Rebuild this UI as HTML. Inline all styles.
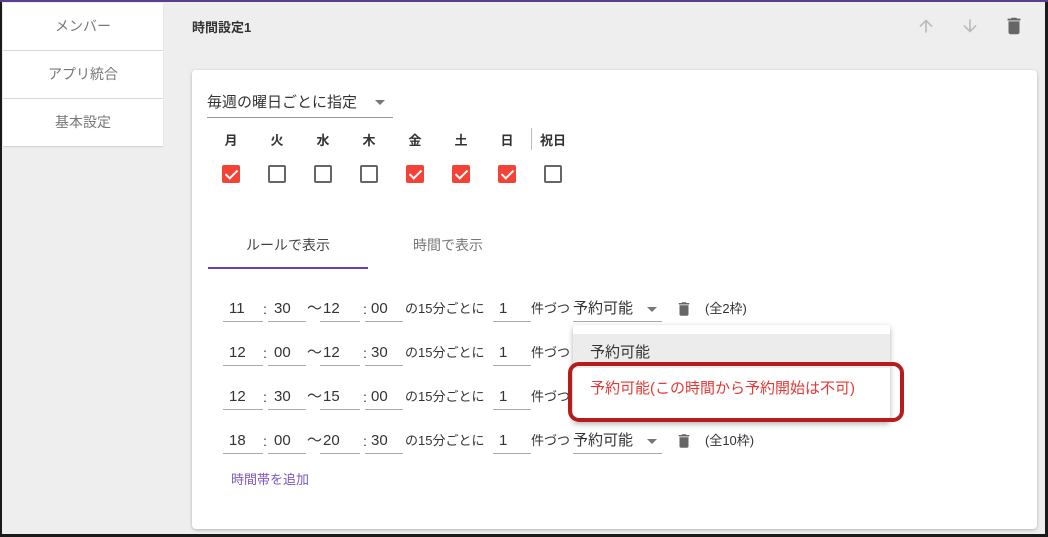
<!DOCTYPE html>
<html><head><meta charset="utf-8"><style>
*{margin:0;padding:0;box-sizing:border-box}
body{width:1048px;height:537px;overflow:hidden;background:#1a1a1a;font-family:"Liberation Sans","Noto Sans CJK JP",sans-serif;position:relative}
.frame{position:absolute;left:2px;top:2px;width:1043px;height:532px;background:#eeeeee;overflow:hidden}
.top{position:absolute;left:0;top:0;width:1048px;height:2px;background:#5a3f8a}
.a{position:absolute;white-space:nowrap}
.side{position:absolute;left:1px;width:160px;height:47px;background:#fff;color:#777;font-size:14px;text-align:center;line-height:47px;box-shadow:0 1px 1px rgba(0,0,0,.12)}
.card{position:absolute;left:190px;top:68px;width:845px;height:459px;background:#fff;border-radius:4px;box-shadow:0 1px 3px rgba(0,0,0,.25)}
.day{position:absolute;top:128px;font-size:13px;font-weight:bold;color:#333;width:30px;text-align:center}
.cb{position:absolute;top:163px;width:18px;height:18px;border:2px solid #666;border-radius:2px}
.cb.on{background:#f44336;border-color:#f44336}
.cb.on::after{content:"";position:absolute;left:4px;top:0px;width:5px;height:10px;border:solid #fff;border-width:0 2px 2px 0;transform:rotate(45deg)}
.f{position:absolute;font-size:15px;color:#333;border-bottom:1px solid #aaa;height:27px;line-height:27px;padding-left:6px}
.t{position:absolute;font-size:14px;color:#333;line-height:26px}
.arr{position:absolute;width:0;height:0;border-left:5px solid transparent;border-right:5px solid transparent;border-top:5px solid #777}
</style></head><body>
<div class="frame">
<div class="side" style="top:1px">メンバー</div>
<div class="side" style="top:49px">アプリ統合</div>
<div class="side" style="top:97px">基本設定</div>
<div class="a" style="left:190px;top:15px;font-size:13px;font-weight:bold;color:#333">時間設定1</div>
<svg class="a" style="left:914px;top:14px" width="20" height="20" viewBox="0 0 24 24"><path d="M4 12l1.4 1.4L11 7.8V20h2V7.8l5.6 5.6L20 12l-8-8z" fill="#bbb"/></svg>
<svg class="a" style="left:958px;top:14px" width="20" height="20" viewBox="0 0 24 24"><path d="M20 12l-1.4-1.4L13 16.2V4h-2v12.2l-5.6-5.6L4 12l8 8z" fill="#bbb"/></svg>
<svg class="a" style="left:1001px;top:13px" width="22" height="22" viewBox="0 0 24 24"><path d="M6 19c0 1.1.9 2 2 2h8c1.1 0 2-.9 2-2V7H6zM19 4h-3.5l-1-1h-5l-1 1H5v2h14z" fill="#666"/></svg>
<div class="card"></div>
<div class="a" style="left:205px;top:89px;font-size:15px;color:#333">毎週の曜日ごとに指定</div>
<div class="arr" style="left:373px;top:98px"></div>
<div class="a" style="left:205px;top:115px;width:186px;height:1px;background:#999"></div>
<div class="day" style="left:214px">月</div><div class="day" style="left:260px">火</div><div class="day" style="left:306px">水</div><div class="day" style="left:352px">木</div><div class="day" style="left:398px">金</div><div class="day" style="left:444px">土</div><div class="day" style="left:490px">日</div><div class="day" style="left:536px">祝日</div>
<div class="a" style="left:529px;top:126px;width:1px;height:22px;background:#bbb"></div>
<div class="cb on" style="left:220px"></div><div class="cb" style="left:266px"></div><div class="cb" style="left:312px"></div><div class="cb" style="left:358px"></div><div class="cb on" style="left:404px"></div><div class="cb on" style="left:450px"></div><div class="cb on" style="left:496px"></div><div class="cb" style="left:542px"></div>
<div class="a" style="left:206px;top:233px;width:160px;text-align:center;font-size:14px;color:#444">ルールで表示</div>
<div class="a" style="left:366px;top:233px;width:160px;text-align:center;font-size:14px;color:#777">時間で表示</div>
<div class="a" style="left:206px;top:265px;width:160px;height:2px;background:#6a3fb5"></div>

<div id="rows"></div>
<div class="a" style="left:229px;top:467px;font-size:13px;color:#7e57c2">時間帯を追加</div>

<div class="a" style="left:571px;top:323px;width:317px;height:97px;background:#fff;box-shadow:0 2px 6px rgba(0,0,0,.3);border-radius:3px"></div>
<div class="a" style="left:571px;top:332px;width:317px;height:34px;background:#ececec"></div>
<div class="a" style="left:588px;top:339px;font-size:15px;color:#333">予約可能</div>
<div class="a" style="left:566px;top:360px;width:336px;height:60px;border:4px solid #b71c1c;border-radius:11px"></div>
<div class="a" style="left:588px;top:375px;font-size:15px;color:#e53935">予約可能(この時間から予約開始は不可)</div>
</div>
<div class="top"></div>
<script>
var rows=[["11","30","12","00","(全2枠)",true],["12","00","12","30","",false],["12","30","15","00","",false],["18","00","20","30","(全10枠)",true]];
var h="";rows.forEach(function(r,i){var y=293+i*44;
h+='<div class="f" style="left:221px;top:'+y+'px;width:40px">'+r[0]+'</div>';
h+='<div class="t" style="left:261px;top:'+(y+1)+'px">:</div>';
h+='<div class="f" style="left:266px;top:'+y+'px;width:38px">'+r[1]+'</div>';
h+='<div class="t" style="left:305px;top:'+(y+1)+'px;font-size:15px">～</div>';
h+='<div class="f" style="left:318px;top:'+y+'px;width:40px;padding-left:3px">'+r[2]+'</div>';
h+='<div class="t" style="left:361px;top:'+(y+1)+'px">:</div>';
h+='<div class="f" style="left:363px;top:'+y+'px;width:38px">'+r[3]+'</div>';
h+='<div class="t" style="left:403px;top:'+(y+1)+'px;font-size:13px">の15分ごとに</div>';
h+='<div class="f" style="left:491px;top:'+y+'px;width:38px">1</div>';
h+='<div class="t" style="left:529px;top:'+(y+1)+'px;font-size:13px">件づつ</div>';
if(r[5]){h+='<div class="f" style="left:571px;top:'+y+'px;width:89px;padding-left:0">予約可能</div>';
h+='<div class="arr" style="left:645px;top:'+(y+12)+'px"></div>';
h+='<svg class="a" style="left:673px;top:'+(y+5)+'px" width="18" height="18" viewBox="0 0 24 24"><path d="M6 19c0 1.1.9 2 2 2h8c1.1 0 2-.9 2-2V7H6zM19 4h-3.5l-1-1h-5l-1 1H5v2h14z" fill="#666"/></svg>';
h+='<div class="t" style="left:703px;top:'+(y+1)+'px;font-size:13px">'+r[4]+'</div>';}
});
document.getElementById("rows").outerHTML=h;
</script>
</body></html>
